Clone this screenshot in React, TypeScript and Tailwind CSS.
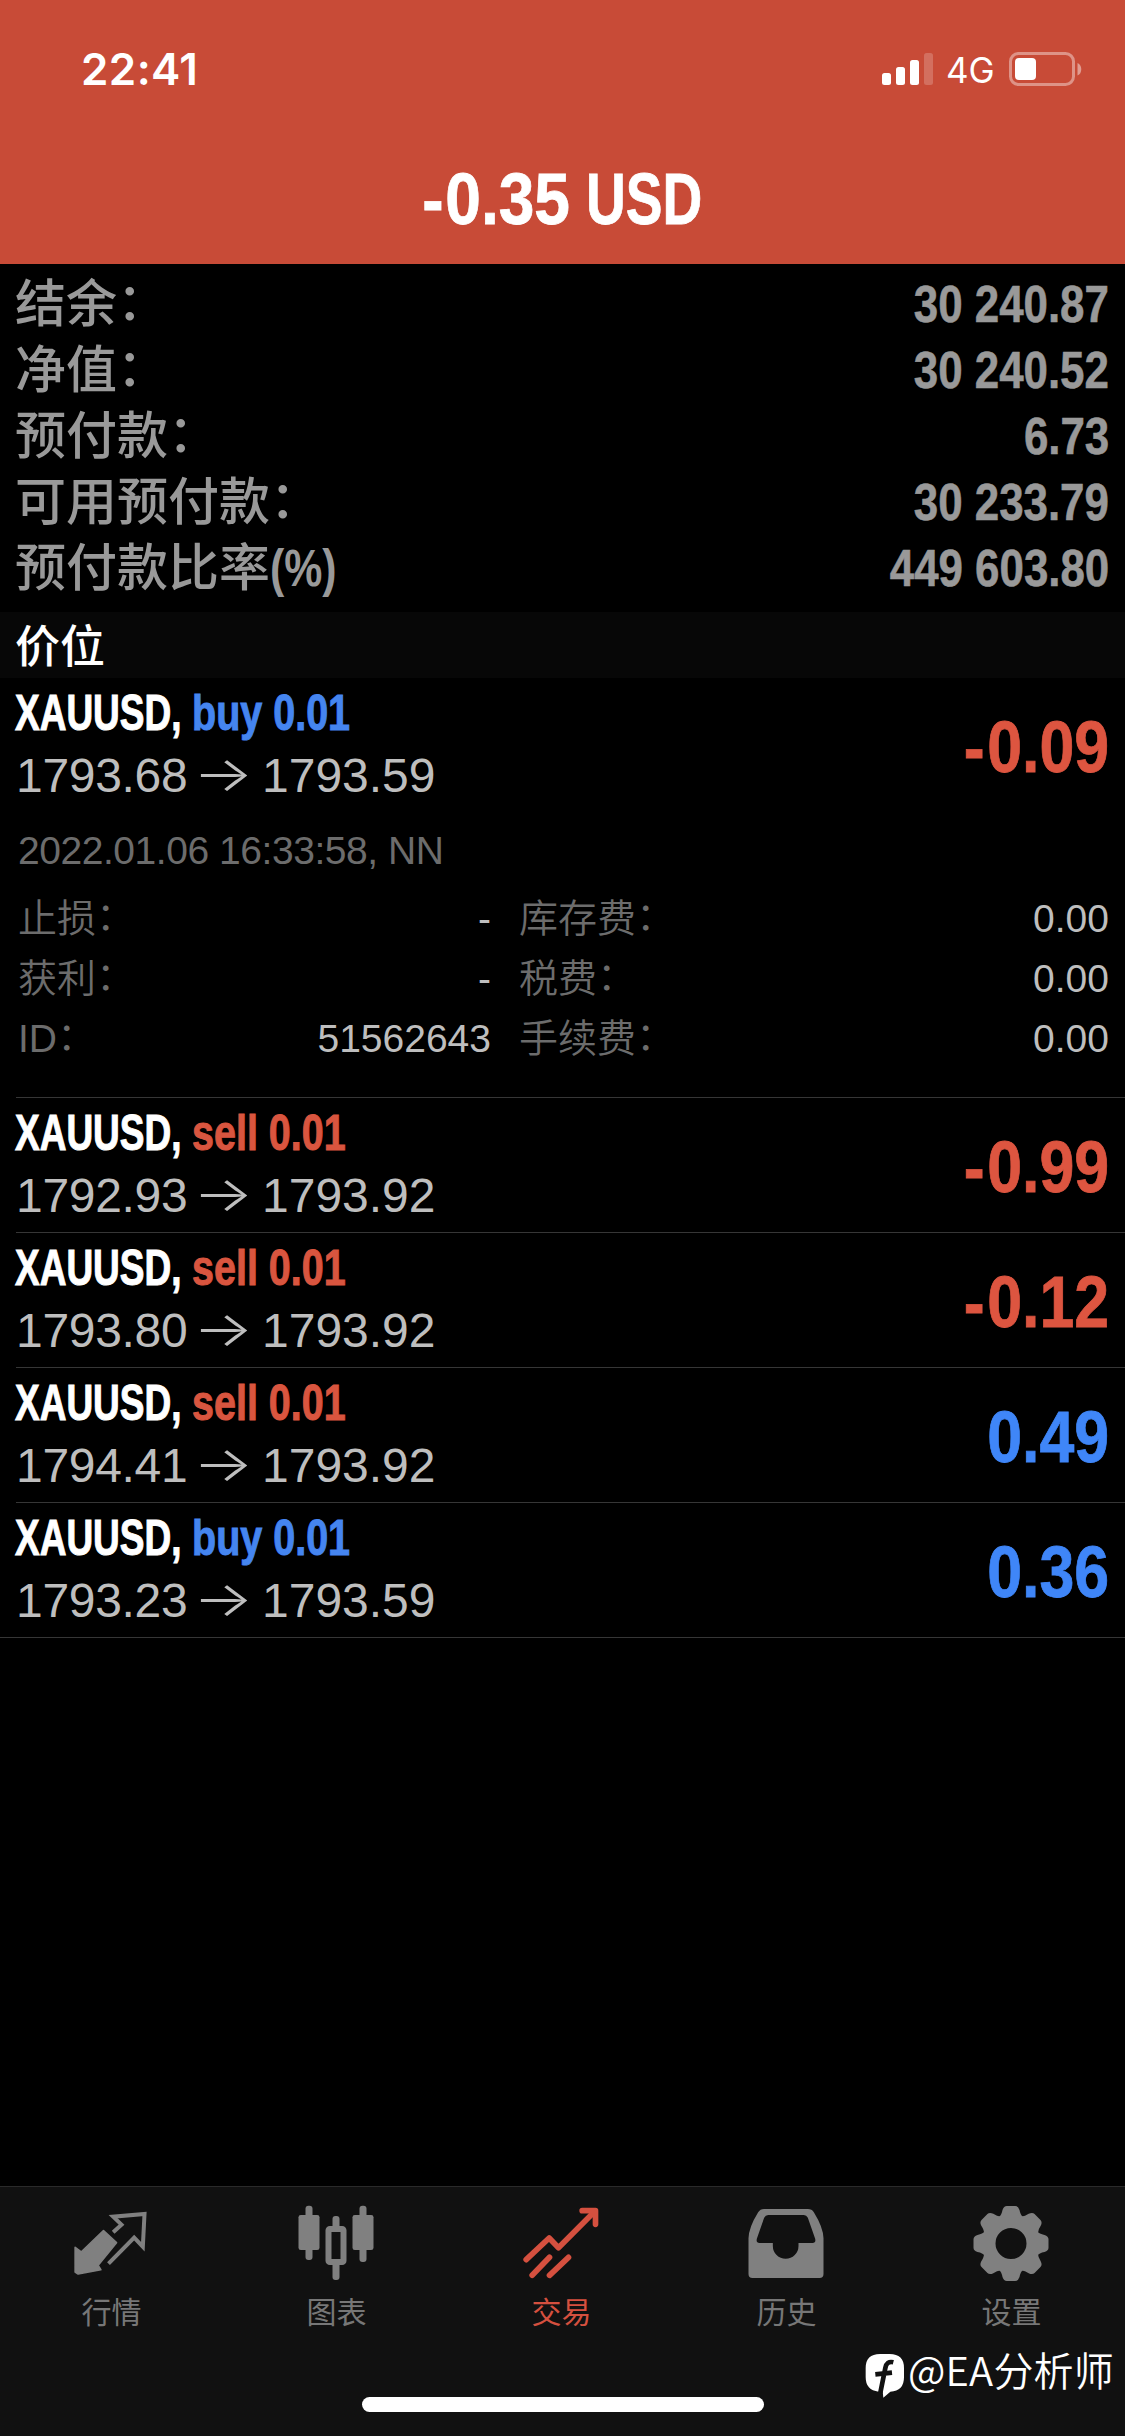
import clsx from "clsx";
import type { ReactNode } from "react";

type Side = "buy" | "sell";

type Position = {
  side: Side;
  open: string;
  current: string;
  profit: string;
};

const SUMMARY = [
  { label: "结余", suffix: "：", value: "30 240.87" },
  { label: "净值", suffix: "：", value: "30 240.52" },
  { label: "预付款", suffix: "：", value: "6.73" },
  { label: "可用预付款", suffix: "：", value: "30 233.79" },
  { label: "预付款比率", suffix: "(%)", value: "449 603.80" },
];

const POSITIONS: Position[] = [
  { side: "buy", open: "1793.68", current: "1793.59", profit: "-0.09" },
  { side: "sell", open: "1792.93", current: "1793.92", profit: "-0.99" },
  { side: "sell", open: "1793.80", current: "1793.92", profit: "-0.12" },
  { side: "sell", open: "1794.41", current: "1793.92", profit: "0.49" },
  { side: "buy", open: "1793.23", current: "1793.59", profit: "0.36" },
];

const DETAILS = [
  { label: "止损", value: "-", label2: "库存费", value2: "0.00" },
  { label: "获利", value: "-", label2: "税费", value2: "0.00" },
  { label: "ID", value: "51562643", label2: "手续费", value2: "0.00" },
];

function StatusBar() {
  return (
    <div className="flex h-[110px] items-start justify-between pl-[81px] pr-[42px] text-white">
      <div className="mt-[42px] font-['Inter'] text-[44px] leading-[54px] font-semibold tracking-[0.4px]">
        22:41
      </div>
      <div className="mt-[50px] flex items-start">
        <svg className="mt-[3px] h-[33px] w-[51px]" viewBox="0 0 51 33" fill="white">
          <rect x="0" y="20" width="9" height="12" rx="2.5" />
          <rect x="14" y="14" width="9" height="18" rx="2.5" />
          <rect x="28" y="7" width="9" height="25" rx="2.5" />
          <rect x="42" y="0" width="9" height="32" rx="2.5" opacity="0.2" />
        </svg>
        <span className="ml-[13px] w-[49px] font-['Inter'] text-[35px] leading-10">4G</span>
        <svg className="ml-[14px] mt-[2px] h-[34px] w-[74px]" viewBox="0 0 74 34">
          <rect x="1.5" y="1.5" width="63" height="31" rx="8" fill="none" stroke="white" strokeOpacity="0.4" strokeWidth="3" />
          <rect x="6" y="6" width="21" height="22" rx="4" fill="white" />
          <path d="M68.5 11c5 1.500 5 11 0 12.500z" fill="white" fillOpacity="0.45" />
        </svg>
      </div>
    </div>
  );
}

function PositionRow({ position, last, children }: { position: Position; last?: boolean; children?: ReactNode }) {
  const { side, open, current, profit } = position;
  const loss = profit.startsWith("-");
  return (
    <div className={clsx("border-b border-[#363636]", last ? "pl-4" : "ml-4")}>
      <div className="flex h-[134px] items-start justify-between pr-4">
        <div className="pt-[7px]">
          <div className="-ml-px flex text-[50px] leading-[56px] font-bold [-webkit-text-stroke:1px]">
            <div className="w-[177px]">
              <span className="inline-block origin-left scale-x-[0.74] text-white">XAUUSD,</span>
            </div>
            <span
              className={clsx(
                "inline-block origin-left scale-x-[0.79] whitespace-nowrap",
                side === "buy" ? "text-[#4585f0]" : "text-[#d9553f]"
              )}
            >
              {side} 0.01
            </span>
          </div>
          <div className="flex text-[48px] leading-[70px] text-[#bebebe]">
            <span className="w-[177px] tracking-[-0.3px]">{open}</span>
            <span className="-mt-[2px] w-[69px]">
              <span className="inline-block origin-left scale-x-[1.32] font-['Inter'] font-light">→</span>
            </span>
            <span>{current}</span>
          </div>
        </div>
        <span
          className={clsx(
            "mt-[33px] inline-block origin-right scale-x-[0.87] text-[72px] leading-[72px] font-bold [-webkit-text-stroke:0.8px]",
            loss ? "text-[#dd5540]" : "text-[#3f86f8]"
          )}
        >
          {loss && <span className="mr-[3px]">-</span>}
          {profit.replace("-", "")}
        </span>
      </div>
      {children}
    </div>
  );
}

function DetailLabel({ text, className }: { text: string; className: string }) {
  return (
    <span className={clsx("font-[350]", className)}>
      {text}
      <span className="relative -top-[2px]">：</span>
    </span>
  );
}

function PositionDetails() {
  return (
    <div className="h-[285px] pl-[2px] pr-4 pt-[11px] text-[39px] text-[#6c6c6c]">
      <div className="leading-[56px] tracking-[-0.45px]">2022.01.06 16:33:58, NN</div>
      <div className="mt-[10px]">
        {DETAILS.map((row) => (
          <div key={row.label} className="flex h-[60px] items-baseline leading-[60px]">
            <DetailLabel text={row.label} className="w-[230px]" />
            <span className="w-[243px] text-right text-[#bebebe]">{row.value}</span>
            <DetailLabel text={row.label2} className="ml-[28px] flex-1" />
            <span className="text-[#bebebe]">{row.value2}</span>
          </div>
        ))}
      </div>
    </div>
  );
}

function QuotesIcon() {
  return (
    <svg className="h-20 w-20" viewBox="217.5 96 240 240">
      <path
        d="M312 182 351 218 296 286 304 299 236 312 227 306V232L245 246Z"
        fill="currentColor"
        stroke="currentColor"
        strokeWidth="5"
        strokeLinejoin="round"
      />
      <path
        d="M341 187 366 164 341 140 435 132 430 230 404 203 327 281"
        fill="none"
        stroke="currentColor"
        strokeWidth="12"
      />
    </svg>
  );
}

function ChartIcon() {
  return (
    <svg className="h-20 w-20" viewBox="892.5 96 240 240" fill="currentColor">
      <rect x="918" y="107" width="21" height="163" rx="9" />
      <rect x="897" y="135" width="63" height="105" rx="7" />
      <rect x="1080" y="107" width="21" height="169" rx="9" />
      <rect x="1059" y="135" width="63" height="105" rx="7" />
      <rect x="999" y="138" width="21" height="40" rx="9" />
      <rect x="999" y="276" width="21" height="54" rx="9" />
      <rect x="987" y="177" width="45" height="99" rx="4" fill="none" stroke="currentColor" strokeWidth="18" />
    </svg>
  );
}

function TradeIcon() {
  return (
    <svg
      className="h-20 w-20"
      viewBox="217.5 96 240 240"
      fill="none"
      stroke="currentColor"
      strokeWidth="17"
      strokeLinecap="round"
      strokeLinejoin="round"
    >
      <path d="M230 269 299 204 327 233 436 124" />
      <path d="M398 122H438V163" />
      <path d="M248 316 300 262M300 316 357 262" />
    </svg>
  );
}

function HistoryIcon() {
  return (
    <svg className="h-20 w-20" viewBox="892.5 96 240 240">
      <path
        d="M944 117H1075Q1087 117 1093 127Q1121 172 1122 205V312Q1122 324 1110 324H909Q897 324 897 312V205Q898 172 926 127Q932 117 944 117ZM956 135Q948 135 944 143L922 206Q919 219 930 219H970V228A38 38 0 0 0 1047 228V219H1089Q1100 219 1097 206L1075 143Q1071 135 1063 135Z"
        fill="currentColor"
        fillRule="evenodd"
      />
    </svg>
  );
}

function SettingsIcon() {
  return (
    <svg className="h-20 w-20" viewBox="442.5 96 240 240" fill="currentColor">
      {[0, 45, 90, 135, 180, 225, 270, 315].map((angle) => (
        <path
          key={angle}
          transform={`rotate(${angle} 559.5 220.500)`}
          d="M523 142Q531 136 534 120Q538 108 547 108H572Q581 108 585 120Q588 136 596 142V170H523Z"
        />
      ))}
      <circle cx="559.5" cy="220.500" r="67" fill="none" stroke="currentColor" strokeWidth="41" />
    </svg>
  );
}

const TABS = [
  { label: "行情", icon: QuotesIcon },
  { label: "图表", icon: ChartIcon },
  { label: "交易", icon: TradeIcon, active: true },
  { label: "历史", icon: HistoryIcon },
  { label: "设置", icon: SettingsIcon },
];

function Watermark() {
  return (
    <div className="absolute right-[11px] top-[152px] flex items-start text-white">
      <svg className="mt-[14px] h-[46px] w-[40px]" viewBox="117 549 120 138">
        <path
          d="M162 552H191Q234 552 234 594V622Q234 663 193 665L172 683 170 664 158 665Q119 661 119 622V594Q119 552 162 552Z"
          fill="white"
        />
        <path d="M202 577Q182 572 178 594L163 668M148 613 198 608" fill="none" stroke="#111" strokeWidth="14" />
      </svg>
      <span className="ml-[3px] font-['Noto_Sans_CJK_SC',sans-serif] text-[40px] leading-[60px] font-[350] tracking-[0.2px]">
        @EA分析师
      </span>
    </div>
  );
}

export default function App() {
  return (
    <div className="flex h-[2436px] w-[1125px] flex-col overflow-hidden bg-black font-['Liberation_Sans','Noto_Sans_CJK_SC',sans-serif]">
      <header className="h-[264px] bg-[#c84b37]">
        <StatusBar />
        <h1 className="mt-[53px] flex gap-[16px] text-[72px] leading-[72px] font-bold text-white [-webkit-text-stroke:0.8px]">
          <span className="w-[570px] origin-right scale-x-[0.89] text-right">
            <span className="mr-[2px]">-</span>0.35
          </span>
          <span className="origin-left scale-x-[0.765]">USD</span>
        </h1>
      </header>

      <section className="h-[348px] pl-[15px] pr-4 pt-[4px] text-[51px] text-[#999]">
        {SUMMARY.map((row) => (
          <div key={row.label} className="flex h-[66px] items-baseline justify-between leading-[74px]">
            <span className="font-medium">
              {row.label}
              {row.suffix === "：" ? (
                <span className="relative -top-[2px]">：</span>
              ) : (
                <span className="inline-block origin-left scale-x-[0.84] font-bold">{row.suffix}</span>
              )}
            </span>
            <span className="inline-block origin-right scale-x-[0.86] font-bold [-webkit-text-stroke:0.6px]">
              {row.value}
            </span>
          </div>
        ))}
      </section>

      <h2 className="h-[66px] bg-[#070707] pl-[15px] font-['Noto_Sans_CJK_SC',sans-serif] text-[45px] leading-[64px] font-medium text-white">
        价位
      </h2>

      <main className="flex-1">
        {POSITIONS.map((position, i) => (
          <PositionRow key={i} position={position} last={i === POSITIONS.length - 1}>
            {i === 0 && <PositionDetails />}
          </PositionRow>
        ))}
      </main>

      <nav className="relative h-[250px] border-t border-[#2a2a2a] bg-[#111]">
        <div className="-ml-px mr-px grid grid-cols-5 pt-[15px]">
          {TABS.map(({ label, icon: Icon, active }) => (
            <div
              key={label}
              className={clsx("flex flex-col items-center gap-2", active ? "text-[#d5503f]" : "text-[#808080]")}
            >
              <Icon />
              <span
                className={clsx(
                  "font-['Noto_Sans_CJK_SC',sans-serif] text-[30px] leading-10",
                  !active && "text-[#777]"
                )}
              >
                {label}
              </span>
            </div>
          ))}
        </div>
        <div className="mx-auto mt-[67px] h-[15px] w-[402px] rounded-full bg-white" />
        <Watermark />
      </nav>
    </div>
  );
}
